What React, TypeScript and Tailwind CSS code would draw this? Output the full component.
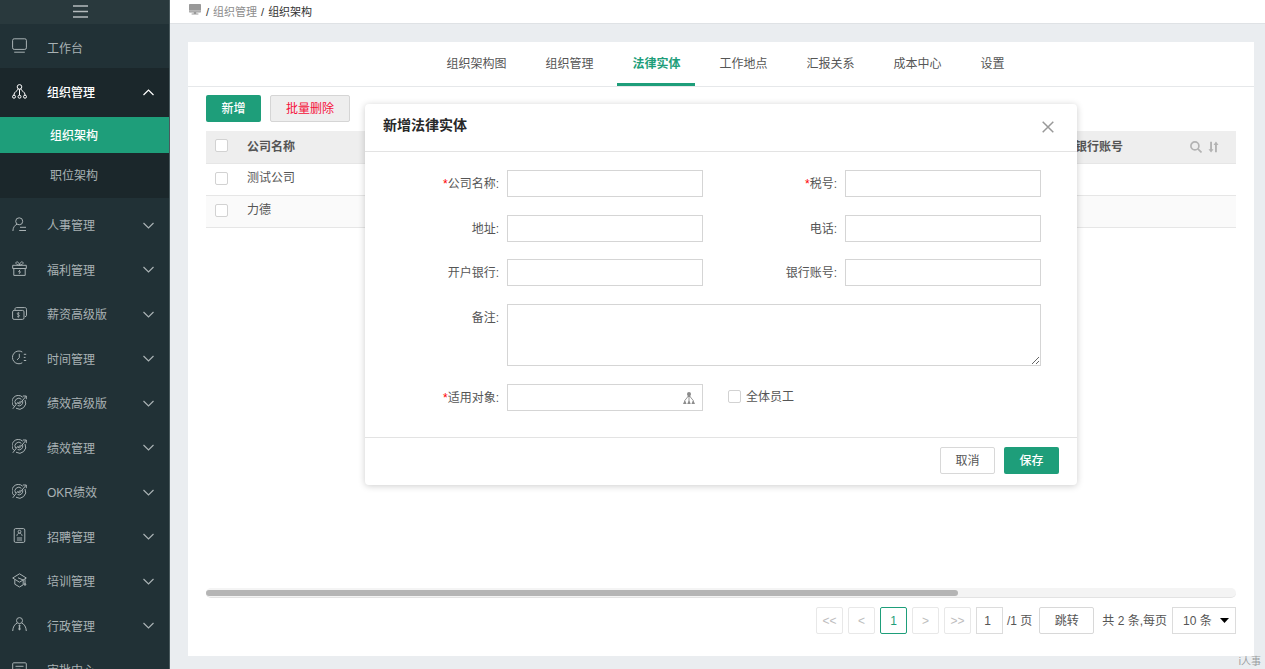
import React, { useState } from "react";

type IconName =
  | "desk"
  | "org"
  | "person"
  | "gift"
  | "salary"
  | "clock"
  | "target"
  | "badge"
  | "cap"
  | "admin"
  | "approve";

const iconShapes: Record<IconName, React.ReactNode> = {
  desk: (
    <>
      <rect x="0.6" y="0.8" width="13.8" height="10.6" rx="1.6" />
      <path d="M2.2 14.2h10.6" />
    </>
  ),
  org: (
    <>
      <circle cx="7.5" cy="2.9" r="2.3" />
      <path d="M7.5 5.2v6M6.3 4.8C5.8 7 1.9 7.6 1.9 11M8.7 4.8C9.2 7 13.1 7.6 13.1 11" />
      <circle cx="2" cy="12.7" r="1.5" />
      <circle cx="7.5" cy="12.7" r="1.5" />
      <circle cx="13" cy="12.7" r="1.5" />
    </>
  ),
  person: (
    <>
      <circle cx="7.2" cy="4.3" r="3.5" />
      <path d="M5 7.2C2.6 8.3 1 10.6 0.9 14M8 10.3H14M7.2 13.5H14" />
    </>
  ),
  gift: (
    <>
      <path d="M0.7 4.3h13.6v3.2H0.7zM1.8 7.5v6.9h11.4V7.5" />
      <path d="M7.5 4.3C5.5 4.2 3.5 3 4 1.5 4.6 0 7.2 1 7.5 4.3zM7.5 4.3c2-.1 4-1.3 3.5-2.8C10.4 0 7.8 1 7.5 4.3z" />
      <path d="M8 8.8l-1.4 2h1.8l-1.2 2" />
    </>
  ),
  salary: (
    <>
      <rect x="0.6" y="4.4" width="11.4" height="9" rx="1.5" />
      <path d="M3 4.2V3.1c0-.9.5-1.5 1.4-1.5h8.3c1.2 0 1.8.6 1.8 1.7v5.9c0 .9-.6 1.5-1.5 1.5" />
      <path d="M7.5 7.2C6.9 6.6 5.2 6.7 5.2 7.800s2.300.8 2.300 1.900-1.700 1.200-2.400.5M6.300 6.100v5.700" strokeWidth="0.8" />
    </>
  ),
  clock: (
    <>
      <path d="M10.3 2A6.4 6.4 0 1 0 10.3 12.8" />
      <path d="M7.3 3.8v3.9L5 9.9M11.8 4.3h2.4M11.8 7.4h1.7M11.8 10.5h2.4" />
    </>
  ),
  target: (
    <>
      <path d="M10.7 2.2A6.3 6.3 0 0 0 1.9 11.3M4 13.2A6.3 6.3 0 0 0 13 5" />
      <path d="M9.4 4.3A3.8 3.8 0 0 0 3.5 9M5.6 10.6A3.8 3.8 0 0 0 10.7 6.2" />
      <path d="M0.8 13.8L5.6 7.5 7.6 9 14 1.3M10.9 1H14.3V4.2M5.9 8.9L8.7 5.8" />
    </>
  ),
  badge: (
    <>
      <rect x="2.2" y="0.6" width="10.6" height="13.8" rx="1.4" />
      <circle cx="7.5" cy="3.7" r="1.4" />
      <path d="M4.9 7.8C5.2 5.9 6.3 5.2 7.5 5.2s2.3.7 2.6 2.6M4.9 10h5.2M4.9 12h5.2" />
    </>
  ),
  cap: (
    <path d="M7.5 0.8L14.3 5 7.5 9.2 0.7 5zM2.8 6.5v4.7L7.5 14l3.7-2.2V7M13 6.2v3.8M6 4.8l5.2 2.2M13 10l-1 2h2z" />
  ),
  admin: (
    <>
      <circle cx="7.5" cy="3.6" r="3" />
      <path d="M5.3 6C2.6 7.2.9 10 .7 14M9.7 6C12.4 7.2 14.1 10 14.3 14M7.5 7.6v2" />
      <path d="M6.500 8h2l-.4 2 .6 2.300-1.200 1.300-1.200-1.300.6-2.300z" fill="currentColor" stroke="none" />
    </>
  ),
  approve: (
    <>
      <path d="M9.5 14H1.7c-.7 0-1-.4-1-1V1.8c0-.7.4-1 1-1h11.6c.7 0 1 .4 1 1V8" />
      <path d="M3.5 4.3h8M3.5 7.3h5M10 12l1.8 1.8L14.5 10" />
    </>
  ),
};

function MenuIcon({ name }: { name: IconName }) {
  return (
    <svg className="mb-0.5 size-[15px] shrink-0" viewBox="0 0 15 15" fill="none" stroke="currentColor" strokeWidth="1" aria-hidden="true">
      {iconShapes[name]}
    </svg>
  );
}

function Chevron({ up = false }: { up?: boolean }) {
  return (
    <svg className="h-[7px] w-[11px] shrink-0" viewBox="0 0 11 7" fill="none" stroke="currentColor" strokeWidth="1.2" aria-hidden="true">
      <path d={up ? "M0.5 6L5.5 1l5 5" : "M0.5 1l5 5 5-5"} />
    </svg>
  );
}

const modules: { label: string; icon: IconName; leaf?: boolean }[] = [
  { label: "人事管理", icon: "person" },
  { label: "福利管理", icon: "gift" },
  { label: "薪资高级版", icon: "salary" },
  { label: "时间管理", icon: "clock" },
  { label: "绩效高级版", icon: "target" },
  { label: "绩效管理", icon: "target" },
  { label: "OKR绩效", icon: "target" },
  { label: "招聘管理", icon: "badge" },
  { label: "培训管理", icon: "cap" },
  { label: "行政管理", icon: "admin" },
  { label: "审批中心", icon: "approve", leaf: true },
];

function Sidebar() {
  return (
    <aside className="w-[170px] shrink-0 overflow-hidden border-r border-[#4a5a5e] bg-[#213136] text-[#a9b2b4]">
      <button type="button" aria-label="收起菜单" className="flex h-6 w-full items-center justify-center bg-[#29393d] pb-0.5 pr-2">
        <svg className="h-[13px] w-[15px]" viewBox="0 0 15 13" stroke="#b4bbbd" strokeWidth="1.5" aria-hidden="true">
          <path d="M0 1h15M0 6.5h15M0 12h15" />
        </svg>
      </button>
      <nav>
        <a href="#desk" className="flex h-11 items-center pl-3">
          <MenuIcon name="desk" />
          <span className="ml-5 pt-1.5">工作台</span>
        </a>
        <div className="bg-[#1b272b]">
          <button type="button" aria-expanded="true" className="flex h-[49px] w-full items-center pl-3 pr-[15px] font-medium text-white">
            <MenuIcon name="org" />
            <span className="ml-5 flex-1 text-left">组织管理</span>
            <Chevron up />
          </button>
          <a href="#structure" className="flex h-9 items-center bg-[#1e9e7a] pl-[50px] pt-px font-medium text-white">
            组织架构
          </a>
          <a href="#position" className="flex h-[45px] items-center pl-[50px]">
            职位架构
          </a>
        </div>
        <div className="flex h-[494px] flex-col justify-between pt-[5px]">
          {modules.map((m) => (
            <button key={m.label} type="button" className="flex h-11 w-full shrink-0 items-center pl-3 pr-[15px]">
              <MenuIcon name={m.icon} />
              <span className="ml-5 flex-1 pt-0.5 text-left">{m.label}</span>
              {!m.leaf && <Chevron />}
            </button>
          ))}
        </div>
      </nav>
    </aside>
  );
}

const tabs = ["组织架构图", "组织管理", "法律实体", "工作地点", "汇报关系", "成本中心", "设置"];

function Tabs() {
  return (
    <nav className="flex h-[45px] justify-center gap-[9px] border-b border-[#e6e8ea] pl-[9px]">
      {tabs.map((t) => (
        <a
          key={t}
          href={"#" + t}
          className={
            t === "法律实体"
              ? "flex items-center border-b-[3px] border-[#1e9e7a] px-[15px] pt-[3px] font-bold text-[#1e9e7a]"
              : "flex items-center border-b-[3px] border-transparent px-[15px] pt-[3px]"
          }
        >
          {t}
        </a>
      ))}
    </nav>
  );
}

function Check({ id, label }: { id: string; label?: string }) {
  return (
    <input
      id={id}
      type="checkbox"
      aria-label={label}
      className="block size-[13px] shrink-0 appearance-none rounded-xs border border-[#d2d2d2] bg-white checked:bg-[#1e9e7a]"
    />
  );
}

function EntityTable() {
  return (
    <table className="w-full table-fixed border-collapse text-left">
      <thead>
        <tr className="h-8 border-b border-[#e6e6e6] bg-[#eeeeee]">
          <th className="w-[41px] pb-0.5 pl-[9px]">
            <Check id="all-rows" label="全选" />
          </th>
          <th className="font-bold">公司名称</th>
          <th className="w-[161px] font-bold">
            <div className="flex items-center pr-[17px]">
              <span className="flex-1">银行账号</span>
              <button type="button" aria-label="搜索" className="mr-[6px]">
                <svg className="size-3" viewBox="0 0 12 12" fill="none" stroke="#b3b3b3" strokeWidth="1.7" aria-hidden="true">
                  <circle cx="4.9" cy="4.9" r="4" />
                  <path d="M7.9 7.9L11.5 11.5" />
                </svg>
              </button>
              <button type="button" aria-label="排序">
                <svg className="h-3 w-[11px]" viewBox="0 0 11 12" fill="#b3b3b3" aria-hidden="true">
                  <path d="M2.1 .8h1.900v7.400h1.500L3.050 11.500.500 8.200h1.600zM7 11.200h1.900V4h1.600L7.950.600 5.500 4H7z" />
                </svg>
              </button>
            </div>
          </th>
        </tr>
      </thead>
      <tbody>
        {["测试公司", "力德"].map((name, i) => (
          <tr key={name} className="h-8 border-b border-[#e6e6e6] even:bg-[#fafafa]">
            <td className="pb-0.5 pl-[9px]">
              <Check id={"row-" + i} label={name} />
            </td>
            <td className="pb-0.5">{name}</td>
            <td />
          </tr>
        ))}
      </tbody>
    </table>
  );
}

function PageButton({ children, active = false }: { children: string; active?: boolean }) {
  return (
    <button
      type="button"
      className={
        active
          ? "size-[27px] rounded-xs border border-[#1e9e7a] text-[#1e9e7a]"
          : "size-[27px] rounded-xs border border-[#e8e8e8] text-[#bdbdbd]"
      }
    >
      {children}
    </button>
  );
}

function Pagination() {
  return (
    <div className="flex items-center justify-end">
      <div className="flex gap-[5px]">
        <PageButton>{"<<"}</PageButton>
        <PageButton>{"<"}</PageButton>
        <PageButton active>1</PageButton>
        <PageButton>{">"}</PageButton>
        <PageButton>{">>"}</PageButton>
        <input aria-label="页码" defaultValue="1" className="size-[27px] border border-[#dcdcdc] pr-1 text-center outline-none" />
      </div>
      <span className="ml-1">/1 页</span>
      <button type="button" className="ml-[7px] h-[27px] w-[55px] rounded-xs border border-[#d8d8d8]">
        跳转
      </button>
      <label htmlFor="page-size" className="ml-2">
        共 2 条,每页
      </label>
      <div className="relative ml-[5px]">
        <select id="page-size" className="h-[27px] w-[64px] appearance-none border border-[#dcdcdc] bg-white pl-[10px] outline-none">
          <option>10 条</option>
        </select>
        <svg className="pointer-events-none absolute right-[7px] top-[11px] h-[5px] w-[9px]" viewBox="0 0 9 5" fill="#000" aria-hidden="true">
          <path d="M0 0h9L4.5 5z" />
        </svg>
      </div>
    </div>
  );
}

function FieldLabel({ id, text, required = false }: { id: string; text: string; required?: boolean }) {
  return (
    <label htmlFor={id} className="w-[142px] shrink-0 pr-2 pt-px text-right leading-[27px]">
      {required && <span className="text-[#f00]">*</span>}
      {text}:
    </label>
  );
}

function Field({ id, text, required }: { id: string; text: string; required?: boolean }) {
  return (
    <div className="flex h-[27px]">
      <FieldLabel id={id} text={text} required={required} />
      <input id={id} className="min-w-0 flex-1 border border-[#d5d5d5] px-2 outline-none" />
    </div>
  );
}

function EntityDialog({ onClose }: { onClose: () => void }) {
  return (
    <section
      role="dialog"
      aria-labelledby="dialog-title"
      className="pointer-events-auto flex w-[712px] flex-col rounded-[4px] bg-white shadow-[0_1px_7px_rgba(0,0,0,0.2)]"
    >
      <header className="flex h-12 items-center justify-between border-b border-[#e3e3e3] pb-0.5 pl-[18px] pr-[23px]">
        <h2 id="dialog-title" className="pb-1 text-[14px] font-bold text-[#282828]">
          新增法律实体
        </h2>
        <button type="button" aria-label="关闭" onClick={onClose}>
          <svg className="size-3" viewBox="0 0 12 12" stroke="#999" strokeWidth="1.5" aria-hidden="true">
            <path d="M.7.7l10.6 10.6M11.3.7L.7 11.3" />
          </svg>
        </button>
      </header>
      <form className="flex flex-col gap-[18px] pb-[26px] pr-9 pt-[18px]" onSubmit={(e) => e.preventDefault()}>
        <div className="grid h-[116px] grid-cols-2 content-between">
          <Field id="company" text="公司名称" required />
          <Field id="tax" text="税号" required />
          <Field id="address" text="地址" />
          <Field id="phone" text="电话" />
          <Field id="bank" text="开户银行" />
          <Field id="account" text="银行账号" />
        </div>
        <div className="flex">
          <FieldLabel id="remark" text="备注" />
          <textarea id="remark" className="h-[62px] min-w-0 flex-1 border border-[#d5d5d5] px-2 outline-none" />
        </div>
        <div className="grid grid-cols-2">
          <div className="relative">
            <Field id="scope" text="适用对象" required />
            <svg className="pointer-events-none absolute right-2 top-2 size-3" viewBox="0 0 12 12" fill="#8c8c8c" aria-hidden="true">
              <path d="M6 0a2 2 0 0 1 2 2c0 .9-.4 1.5-.9 1.9L8 5H4l.9-1.1C4.4 3.5 4 2.9 4 2a2 2 0 0 1 2-2z" />
              <path d="M6 5v5M4.6 5L1.8 8.5V10M7.4 5l2.8 3.5V10" fill="none" stroke="#8c8c8c" strokeWidth="0.9" />
              <path d="M1.8 8.6l.9 1.5.9 1.9H0l.9-1.9zM6 8.6l.9 1.5.9 1.9H4.2l.9-1.9zM10.2 8.6l.9 1.5.9 1.9H8.4l.9-1.9z" />
            </svg>
          </div>
          <div className="flex items-center gap-[5px] pb-0.5 pl-[25px]">
            <Check id="everyone" />
            <label htmlFor="everyone">全体员工</label>
          </div>
        </div>
      </form>
      <footer className="flex h-12 items-center justify-end gap-[9px] border-t border-[#e3e3e3] pb-0.5 pr-[18px]">
        <button type="button" onClick={onClose} className="h-[27px] w-[55px] rounded-xs border border-[#d8d8d8]">
          取消
        </button>
        <button type="button" className="h-[27px] w-[55px] rounded-xs bg-[#1e9e7a] font-medium text-white">
          保存
        </button>
      </footer>
    </section>
  );
}

export default function App() {
  const [open, setOpen] = useState(true);
  return (
    <div
      lang="zh-CN"
      className="flex h-screen overflow-hidden bg-[#eaedf0] font-['Liberation_Sans','Noto_Sans_CJK_SC',sans-serif] text-[12px] leading-[18px] text-[#555]"
    >
      <Sidebar />
      <main className="flex min-w-0 flex-1 flex-col">
        <div className="flex h-6 shrink-0 items-center gap-1 border-b border-[#dfe2e5] bg-white pl-[19px] text-[11px] text-[#333]">
          <svg className="mb-1 mr-px h-[11px] w-3" viewBox="0 0 12 11" fill="#999" aria-hidden="true">
            <path d="M1 0h10c.6 0 1 .4 1 1v6.5c0 .6-.4 1-1 1H7.2V9.5h2.2v1H2.6v-1h2.2v-1H1c-.6 0-1-.4-1-1V1c0-.6.4-1 1-1z" />
            <path d="M0 6.900h12" stroke="#fff" strokeWidth="0.5" />
          </svg>
          <span>/</span>
          <a href="#org" className="text-[#8c8c8c]">
            组织管理
          </a>
          <span>/</span>
          <span>组织架构</span>
        </div>
        <div className="relative flex min-h-0 flex-1 flex-col pb-[13px] pl-[18px] pr-[11px] pt-[18px]">
          <div className="relative flex min-h-0 flex-1 flex-col bg-white">
            <Tabs />
            <div className="flex min-h-0 flex-1 flex-col px-[18px] pb-[22px] pt-2">
              <div className="mb-[9px] flex gap-[9px]">
                <button type="button" className="h-[27px] w-[55px] rounded-xs bg-[#1e9e7a] font-medium text-white">
                  新增
                </button>
                <button type="button" className="h-[27px] w-20 rounded-xs border border-[#d5d5d5] bg-[#eeeeee] text-[#f5113b]">
                  批量删除
                </button>
              </div>
              <div className="flex-1">
                <EntityTable />
              </div>
              <div className="mb-[9px] h-[10px] rounded-full border-b border-[#e3e3e3] bg-[#f4f4f4] pt-0.5">
                <div className="h-[6px] w-[73%] rounded-full bg-[#b5b5b5]" />
              </div>
              <Pagination />
            </div>
            {open && (
              <div className="pointer-events-none absolute inset-x-0 top-[62px] flex justify-center">
                <EntityDialog onClose={() => setOpen(false)} />
              </div>
            )}
          </div>
          <span className="absolute bottom-0 right-1 text-[10px] leading-[14px] text-[#9a9da0]">i人事</span>
        </div>
      </main>
    </div>
  );
}
